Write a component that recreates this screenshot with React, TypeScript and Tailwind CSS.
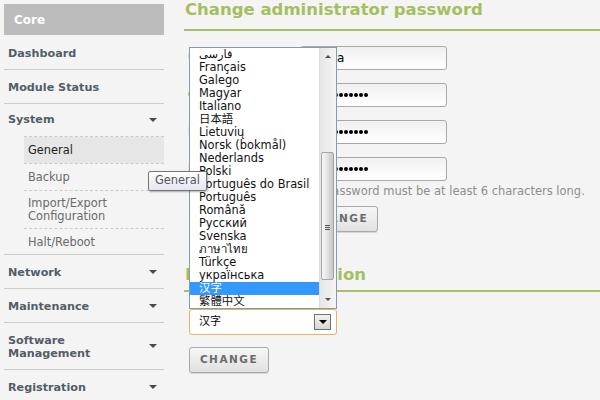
import React from "react";

const languages = [
  "فارسی",
  "Français",
  "Galego",
  "Magyar",
  "Italiano",
  "日本語",
  "Lietuvių",
  "Norsk (bokmål)",
  "Nederlands",
  "Polski",
  "Português do Brasil",
  "Português",
  "Română",
  "Русский",
  "Svenska",
  "ภาษาไทย",
  "Türkçe",
  "українська",
  "汉字",
  "繁體中文",
];

const passwordFields = [
  { label: "User name:", value: "zentya", secret: false },
  { label: "Current password:", value: "", secret: true },
  { label: "New password:", value: "", secret: true },
  { label: "Re-type password:", value: "", secret: true },
];

const Arrow = () => (
  <span className="w-0 h-0 border-x-[4px] border-x-transparent border-t-[4px] border-t-[#4a4a4a]" />
);

const TopItem = ({ children, arrow = false, tall = false }: { children: React.ReactNode; arrow?: boolean; tall?: boolean }) => (
  <div
    className={`shrink-0 flex items-center justify-between pl-[4px] pr-[7px] border-b border-[#cccccc] ${
      tall ? "h-[47px]" : "h-[34px]"
    }`}
  >
    <span className="pt-[1px] text-[11.2px] font-bold text-[#535d67] leading-[13px]">{children}</span>
    {arrow && <Arrow />}
  </div>
);

const SubItem = ({ children, active = false, last = false, h }: { children: React.ReactNode; active?: boolean; last?: boolean; h: string }) => (
  <div
    className={`flex items-center pl-[4px] bg-clip-padding ${h} ${
      last ? "" : "border-b border-dashed border-[#cccccc]"
    } ${active ? "bg-[#e6e6e6] text-[#1e1e1e]" : "text-[#6a6a6a]"}`}
  >
    <span className="pt-[1px] text-[11.4px] leading-[13px]">{children}</span>
  </div>
);

const Heading = ({ children, className = "" }: { children: React.ReactNode; className?: string }) => (
  <h2 className={`pl-[1px] text-[16.5px] font-bold leading-[20px] text-[#a6bf5e] border-b-2 border-[#a8bf62] ${className}`}>
    {children}
  </h2>
);

const Button = ({ w }: { w: string }) => (
  <button
    className={`${w} h-[26px] rounded-[3px] border border-[#a9a9a9] bg-gradient-to-b from-[#f6f6f6] to-[#e1e1e1] shadow-[0_1px_0_#d6d6d6] text-[10.5px] font-bold tracking-[1.5px] text-[#6b6b6b] flex items-center justify-center`}
  >
    CHANGE
  </button>
);

const Dots = () => (
  <span className="flex gap-[1px]">
    {[...Array(13)].map((_, i) => (
      <span key={i} className="w-[4px] h-[4px] rounded-full bg-black" />
    ))}
  </span>
);

const Scrollbar = () => (
  <div className="w-[17px] flex flex-col bg-gradient-to-r from-[#e6e6e6] to-[#f5f5f5] border-l border-[#dcdcdc]">
    <div className="h-[17px] flex items-center justify-center">
      <span className="w-0 h-0 border-x-[3px] border-x-transparent border-b-[3px] border-b-[#505050]" />
    </div>
    <div className="flex-1 flex flex-col">
      <div className="mt-[87px] ml-[1px] w-[13px] h-[128px] rounded-[2px] border border-[#a4a4a4] bg-gradient-to-r from-[#f7f7f7] via-[#e2e2e2] to-[#c6c6c6] flex flex-col items-center">
        <div className="mt-[72px] flex flex-col gap-[1px]">
          <span className="w-[5px] h-[1px] bg-[#555]" />
          <span className="w-[5px] h-[1px] bg-[#555]" />
          <span className="w-[5px] h-[1px] bg-[#555]" />
        </div>
      </div>
    </div>
    <div className="h-[17px] flex items-center justify-center">
      <span className="w-0 h-0 border-x-[3px] border-x-transparent border-t-[3px] border-t-[#505050]" />
    </div>
  </div>
);

export default function App() {
  return (
    <div className="relative w-[600px] h-[400px] overflow-hidden bg-[#f4f4f4] flex items-start font-['DejaVu_Sans','Noto_Sans_CJK_SC',sans-serif]">
      {/* sidebar */}
      <nav className="ml-[4px] mt-[4px] w-[160px] shrink-0">
        <div className="h-[31px] mb-[1px] bg-[#bcbcbc] flex items-center pl-[10px] text-[12px] font-bold text-white">
          Core
        </div>
        <TopItem>Dashboard</TopItem>
        <TopItem>Module Status</TopItem>
        <div className="border-b border-[#cccccc]">
          <div className="h-[32px] flex items-center justify-between pl-[4px] pr-[7px]">
            <span className="pt-[1px] text-[11.2px] font-bold text-[#535d67]">System</span>
            <Arrow />
          </div>
          <div className="ml-[20px] border-t border-dashed border-[#cccccc]">
            <SubItem active h="h-[27px]">General</SubItem>
            <SubItem h="h-[27px]">Backup</SubItem>
            <SubItem h="h-[38px]">
              Import/Export
              <br />
              Configuration
            </SubItem>
            <SubItem last h="h-[25px]">Halt/Reboot</SubItem>
          </div>
        </div>
        <TopItem arrow>Network</TopItem>
        <TopItem arrow>Maintenance</TopItem>
        <TopItem arrow tall>
          Software
          <br />
          Management
        </TopItem>
        <TopItem arrow>Registration</TopItem>
      </nav>

      {/* main */}
      <main className="ml-[20px] flex-1 flex flex-col">
        <Heading className="pb-[9px]">Change administrator password</Heading>
        <div className="mt-[15px] flex flex-col gap-[13px]">
          {passwordFields.map((f) => (
            <div key={f.label} className="flex items-center h-[24px]">
              <label className="w-[116px] pl-[4px] text-[11px] text-[#444] whitespace-nowrap">{f.label}</label>
              <div className="w-[147px] h-[24px] rounded-[3px] border border-[#a9a9a9] bg-gradient-to-b from-[#f0f0f0] to-white flex items-center pl-[3px] overflow-hidden text-[12px] text-black">
                {f.secret ? <Dots /> : f.value}
              </div>
            </div>
          ))}
        </div>
        <p className="mt-[3px] pl-[116px] text-[11.5px] leading-[14px] text-[#8e8e8e]">
          The password must be at least 6 characters long.
        </p>
        <div className="mt-[8px] ml-[116px]">
          <Button w="w-[78px]" />
        </div>

        <div className="mt-[29px]">
          <Heading className="pt-[4px] pb-[5px]">Language selection</Heading>
        </div>
        <div className="mt-[17px] ml-[5px] w-[148px] h-[26px] rounded-[3px] border border-[#e6b260] bg-white flex items-center justify-between pl-[9px] pr-[5px]">
          <span className="text-[11px]">汉字</span>
          <span className="w-[17px] h-[16px] border border-[#707070] bg-gradient-to-b from-[#f2f2f2] to-[#d6d6d6] flex items-center justify-center">
            <span className="w-0 h-0 border-x-[4px] border-x-transparent border-t-[4px] border-t-black" />
          </span>
        </div>
        <div className="mt-[12px] ml-[5px]">
          <Button w="w-[80px]" />
        </div>
      </main>

      {/* open language list */}
      <div className="absolute left-[189px] top-[47px] w-[148px] h-[262px] border border-[#7f9db9] bg-white flex">
        <ul className="flex-1 flex flex-col">
          {languages.map((l) => (
            <li
              key={l}
              className={`h-[13px] pl-[9px] text-[11.4px] leading-[13px] whitespace-nowrap ${
                l === "汉字" ? "bg-[#3399ff] text-white" : "text-[#111]"
              }`}
            >
              {l}
            </li>
          ))}
        </ul>
        <Scrollbar />
      </div>

      {/* tooltip */}
      <div className="absolute left-[148px] top-[171px] h-[20px] px-[6px] flex items-center rounded-[2px] border border-[#767676] bg-gradient-to-b from-white to-[#e4e5f0] shadow-[1px_1px_2px_rgba(0,0,0,0.3)] text-[11.4px] text-[#575757]">
        General
      </div>
    </div>
  );
}
